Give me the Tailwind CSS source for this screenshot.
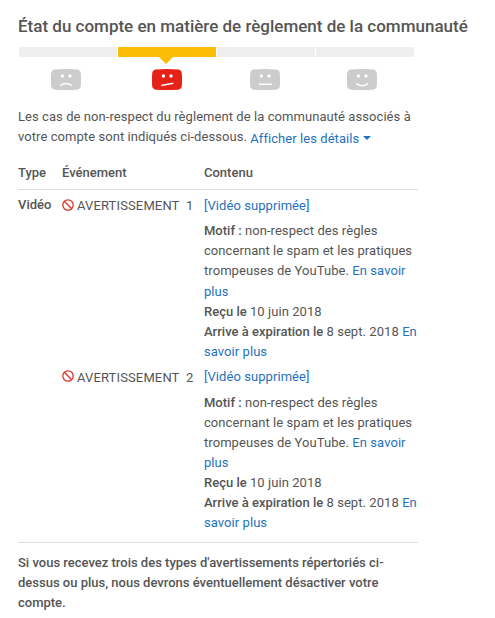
<!DOCTYPE html>
<html lang="fr">
<head>
    <meta charset="UTF-8">
    <meta name="viewport" content="width=device-width, initial-scale=1.0">
    <title>État du compte</title>
    <script src="https://cdn.jsdelivr.net/npm/@tailwindcss/browser@4"></script>
</head>
<body class="bg-white font-['Roboto',sans-serif] text-[13px] leading-[20.15px] text-[#555] overflow-hidden">
    <div class="w-[400px] ml-[18px] pt-[14px]">
        <h1 class="text-[17px] leading-6 font-medium whitespace-nowrap">État du compte en matière de règlement de la communauté</h1>

        <!-- Status bar -->
        <div class="grid grid-cols-[98px_98px_98px_98px] gap-px h-[10px] mt-[9px] ml-px">
            <div class="bg-[#efefef]"></div>
            <div class="relative bg-[#fbbc05]">
                <svg class="absolute left-[41px] top-[10px]" width="14" height="7" viewBox="0 0 14 7" fill="#fbbc05"><path d="M0 0h14L7 7z"/></svg>
            </div>
            <div class="bg-[#efefef]"></div>
            <div class="bg-[#efefef]"></div>
        </div>

        <!-- Faces -->
        <div class="flex h-[22px] mt-[12px] pl-[33px]">
            <svg class="mr-[71px]" width="30" height="22" viewBox="0 0 30 22">
                <path d="M4 .5Q15-.3 26 .5q3.600.3 3.800 4 .5 6.200 0 12.500-.3 3.400-3.800 3.700Q15 21.500 4 20.700.5 20.400.2 17q-.5-6.200 0-12.500Q.4.800 4 .5z" fill="#ccc"/>
                <circle cx="11.400" cy="7" r="1.700" fill="#fff"/><circle cx="19" cy="7" r="1.700" fill="#fff"/>
                <path d="M9.300 16.700q5.700-4.200 11.400 0" fill="none" stroke="#fff" stroke-width="1.500"/>
            </svg>
            <svg class="mr-[68px]" width="30" height="22" viewBox="0 0 30 22">
                <path d="M4 .5Q15-.3 26 .5q3.600.3 3.800 4 .5 6.200 0 12.500-.3 3.400-3.800 3.700Q15 21.500 4 20.700.5 20.400.2 17q-.5-6.200 0-12.500Q.4.800 4 .5z" fill="#e62117"/>
                <circle cx="11.400" cy="7" r="1.700" fill="#fff"/><circle cx="19" cy="7" r="1.700" fill="#fff"/>
                <path d="M9.300 16.400l12-2.200" fill="none" stroke="#fff" stroke-width="1.500"/>
            </svg>
            <svg class="mr-[67px]" width="30" height="22" viewBox="0 0 30 22">
                <path d="M4 .5Q15-.3 26 .5q3.600.3 3.800 4 .5 6.200 0 12.500-.3 3.400-3.800 3.700Q15 21.500 4 20.700.5 20.400.2 17q-.5-6.200 0-12.500Q.4.800 4 .5z" fill="#ccc"/>
                <circle cx="11.400" cy="7" r="1.700" fill="#fff"/><circle cx="19" cy="7" r="1.700" fill="#fff"/>
                <path d="M9 15.300h13" fill="none" stroke="#fff" stroke-width="1.500"/>
            </svg>
            <svg width="30" height="22" viewBox="0 0 30 22">
                <path d="M4 .5Q15-.3 26 .5q3.600.3 3.800 4 .5 6.200 0 12.500-.3 3.400-3.800 3.700Q15 21.500 4 20.700.5 20.400.2 17q-.5-6.200 0-12.500Q.4.800 4 .5z" fill="#ccc"/>
                <circle cx="11.400" cy="7" r="1.700" fill="#fff"/><circle cx="19" cy="7" r="1.700" fill="#fff"/>
                <path d="M9.300 14.300q5.900 4.800 11.800 0" fill="none" stroke="#fff" stroke-width="1.500"/>
            </svg>
        </div>

        <p class="mt-[16px] h-[41px] whitespace-nowrap tracking-[0.065px]">Les cas de non-respect du règlement de la communauté associés à<br>votre compte sont indiqués ci-dessous. <a class="relative top-[2px] text-[#1f72bd]">Afficher les détails<svg class="inline-block align-[3px] ml-1" width="8" height="4" viewBox="0 0 8 4" fill="#1f72bd"><path d="M0 0h8L4 4z"/></svg></a></p>

        <!-- Strikes -->
        <div class="grid grid-cols-[44px_142px_1fr] h-[27px] mt-[15px] border-b border-[#ddd] font-medium">
            <div>Type</div>
            <div>Événement</div>
            <div>Contenu</div>
        </div>
        <div class="grid grid-cols-[44px_142px_1fr] h-[171.4px] mt-[5px] whitespace-nowrap">
            <div class="font-medium">Vidéo</div>
            <div class="flex">
                <svg class="mt-[4px] mr-[3px]" width="12" height="12" viewBox="0 0 12 12" fill="none" stroke="#e0332b" stroke-width="1.300"><circle cx="6" cy="6" r="5.200"/><path d="M2.300 2.300l7.400 7.400"/></svg>
                <span class="mt-px tracking-[0.13px]">AVERTISSEMENT</span><span class="ml-[6.500px] mt-px">1</span>
            </div>
            <div class="pt-px tracking-[0.065px]">
                <a class="text-[#1f72bd]">[Vidéo supprimée]</a>
                <p class="mt-[5px]"><b class="font-medium tracking-normal">Motif :</b> non-respect des règles<br>concernant le spam et les pratiques<br>trompeuses de YouTube. <a class="text-[#1f72bd]">En savoir<br>plus</a><br><b class="font-medium tracking-normal">Reçu le</b> 10 juin 2018<br><b class="font-medium tracking-normal">Arrive à expiration le</b> 8 sept. 2018 <a class="text-[#1f72bd]">En<br>savoir plus</a></p>
            </div>
        </div>
        <div class="grid grid-cols-[44px_142px_1fr] h-[176.6px] border-b border-[#ddd] whitespace-nowrap">
            <div></div>
            <div class="flex">
                <svg class="mt-[4px] mr-[3px]" width="12" height="12" viewBox="0 0 12 12" fill="none" stroke="#e0332b" stroke-width="1.300"><circle cx="6" cy="6" r="5.200"/><path d="M2.300 2.300l7.400 7.400"/></svg>
                <span class="mt-[2px] tracking-[0.13px]">AVERTISSEMENT</span><span class="ml-[6.500px] mt-[2px]">2</span>
            </div>
            <div class="pt-px tracking-[0.065px]">
                <a class="text-[#1f72bd]">[Vidéo supprimée]</a>
                <p class="mt-[5px]"><b class="font-medium tracking-normal">Motif :</b> non-respect des règles<br>concernant le spam et les pratiques<br>trompeuses de YouTube. <a class="text-[#1f72bd]">En savoir<br>plus</a><br><b class="font-medium tracking-normal">Reçu le</b> 10 juin 2018<br><b class="font-medium tracking-normal">Arrive à expiration le</b> 8 sept. 2018 <a class="text-[#1f72bd]">En<br>savoir plus</a></p>
            </div>
        </div>

        <p class="mt-[10px] font-medium whitespace-nowrap">Si vous recevez trois des types d'avertissements répertoriés ci-<br>dessus ou plus, nous devrons éventuellement désactiver votre<br>compte.</p>
    </div>
</body>
</html>
